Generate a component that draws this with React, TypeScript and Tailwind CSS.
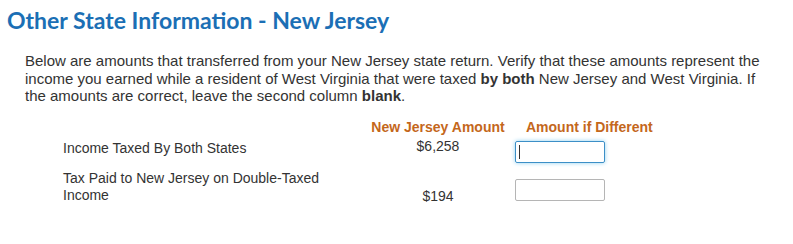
import React from "react";

export default function App() {
  return (
    <div className="w-[793px] h-[244px] bg-white overflow-hidden" style={{ fontFamily: "'Liberation Sans', Arial, sans-serif" }}>
      <h1 className="pl-[7px] pt-[6px] text-[23px] leading-[28px] font-bold text-[#1b6fb5]" style={{ fontFamily: "Lato, 'Open Sans', sans-serif" }}>
        Other State Information - New Jersey
      </h1>
      <p className="pl-[25px] pr-[20px] mt-[18px] text-[15px] leading-[17.5px] text-[#333333]">
        Below are amounts that transferred from your New Jersey state return. Verify that these amounts represent the income you earned while a resident of West Virginia that were taxed <b>by both</b> New Jersey and West Virginia. If the amounts are correct, leave the second column <b>blank</b>.
      </p>
      <div className="mt-[15px] pl-[63px] text-[14px] text-[#333333]">
        <div className="flex items-center h-[16px]">
          <div className="w-[298px]" />
          <div className="w-[154px] text-center font-bold text-[#c4671c]">New Jersey Amount</div>
          <div className="pl-[11px] font-bold text-[#c4671c]">Amount if Different</div>
        </div>
        <div className="flex items-center mt-[5px] h-[22px]">
          <div className="w-[298px] -mt-[6px]">Income Taxed By Both States</div>
          <div className="w-[154px] text-center -mt-[10px]">$6,258</div>
          <div className="w-[90px] h-[22px] border border-[#3c8fc7] rounded-[2px] shadow-[0_0_4px_#8fd0f0] flex items-center pl-[3px]">
            <div className="w-px h-[14px] bg-[#333]" />
          </div>
        </div>
        <div className="flex items-start mt-[16px]">
          <div className="w-[298px] leading-[17px] -mt-[9px]">Tax Paid to New Jersey on Double-Taxed Income</div>
          <div className="w-[154px] text-center mt-[7px]">$194</div>
          <div className="w-[90px] h-[22px] border border-[#b5b5b5] rounded-[2px]" />
        </div>
      </div>
    </div>
  );
}
